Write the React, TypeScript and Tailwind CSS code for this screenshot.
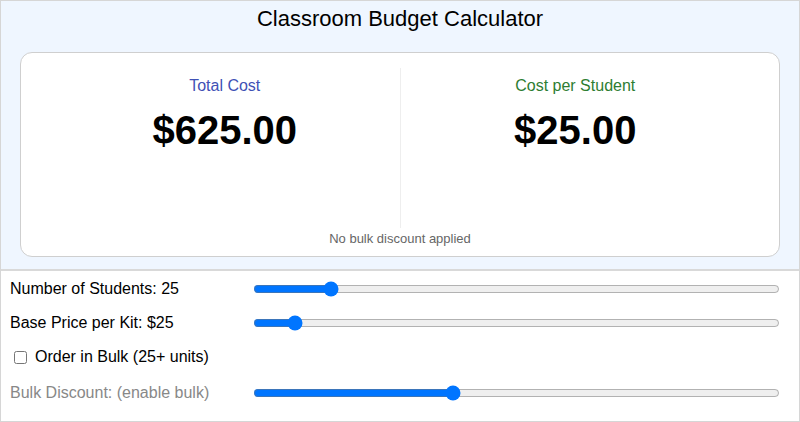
import React from "react";

export default function App() {
  const noop = () => {};
  return (
    <div className="w-[800px] border border-[#d6d6d6] bg-white font-['Liberation_Sans',Arial,sans-serif] text-black">
      <div className="bg-[#eff6ff] border-b-2 border-[#d9d9d9] pb-[12px]">
        <h1 className="pt-[5px] mb-[21px] text-center text-[22px] leading-[25px] font-normal">
          Classroom Budget Calculator
        </h1>
        <div className="mx-[19px] rounded-[12px] border border-[#cfcfcf] bg-white px-[29px] pt-[15px] pb-[10px]">
          <div className="flex h-[160px]">
            <div className="flex-1 flex flex-col items-center pt-[9px] border-r border-[#eeeeee]">
              <div className="text-[16px] leading-[18px] text-[#3f51b5]">Total Cost</div>
              <div className="mt-[12px] text-[40px] leading-[46px] font-bold">$625.00</div>
            </div>
            <div className="flex-1 flex flex-col items-center pt-[9px]">
              <div className="text-[16px] leading-[18px] text-[#2e7d32]">Cost per Student</div>
              <div className="mt-[12px] text-[40px] leading-[46px] font-bold">$25.00</div>
            </div>
          </div>
          <div className="mt-[3px] text-center text-[13px] leading-[15px] text-[#666666]">
            No bulk discount applied
          </div>
        </div>
      </div>
      <div className="pt-[1px] pb-[11px] pl-[9px] pr-[19px] text-[16px]">
        <div className="flex h-[34px] items-center">
          <div className="w-[243px]">Number of Students: 25</div>
          <input type="range" min={0} max={1000} value={137} onChange={noop} className="m-0 flex-1" />
        </div>
        <div className="flex h-[34px] items-center">
          <div className="w-[243px]">Base Price per Kit: $25</div>
          <input type="range" min={0} max={1000} value={67} onChange={noop} className="m-0 flex-1" />
        </div>
        <div className="flex h-[34px] items-center">
          <label className="flex items-center">
            <input type="checkbox" className="m-0 ml-[4px] mr-[8px] w-[13px] h-[13px]" />
            <span>Order in Bulk (25+ units)</span>
          </label>
        </div>
        <div className="flex h-[34px] mt-[2px] items-center">
          <div className="w-[243px] text-[#888888]">Bulk Discount: (enable bulk)</div>
          <input type="range" min={0} max={1000} value={376} onChange={noop} className="m-0 flex-1" />
        </div>
      </div>
    </div>
  );
}
